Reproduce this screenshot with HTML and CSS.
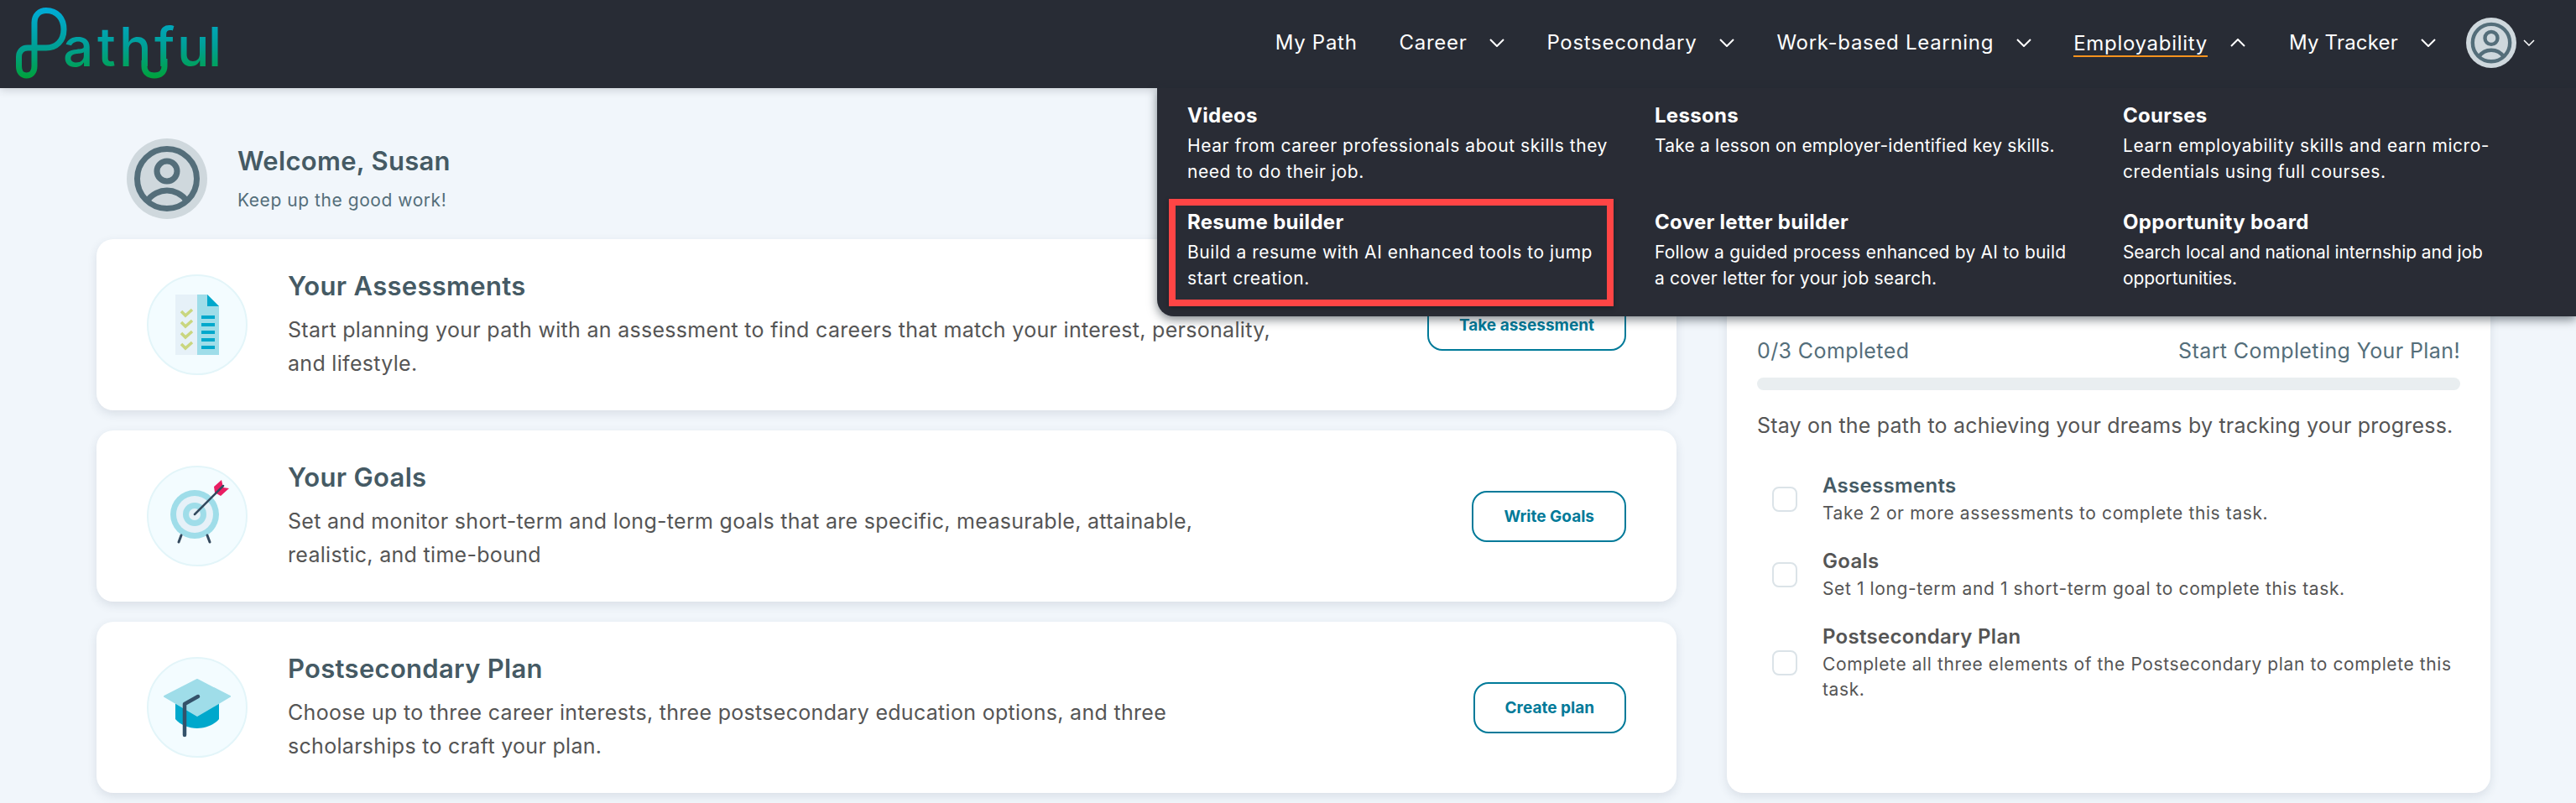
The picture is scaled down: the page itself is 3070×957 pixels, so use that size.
FILE: index.html
```html
<!DOCTYPE html>
<html lang="en">
<head>
<meta charset="utf-8">
<title>Pathful</title>
<link rel="stylesheet" href="styles.css">
</head>
<body>
<header class="topbar">
  <svg class="logo" viewBox="0 0 260 105" width="260" height="105" role="img" aria-label="Pathful">
    <defs>
      <linearGradient id="logoGrad" gradientUnits="userSpaceOnUse" x1="0" y1="9" x2="0" y2="93">
        <stop offset="0" stop-color="#00acd8"/>
        <stop offset=".55" stop-color="#009f96"/>
        <stop offset="1" stop-color="#00a23c"/>
      </linearGradient>
    </defs>
    <path class="logo-line" d="M41 79V27C41 18 47 12.500 55 12.500C68 12.500 76 22 76 35C76 49 67 57 55 57H33C26 57 22.500 62 22.500 68V79C22.500 86 26 90 31.500 90C37 90 41 86 41 79"/>
    <path class="logo-line" d="M172 72V79C172 86 177 90 184 90C191 90 196 86 196 79V70"/>
    <text class="logo-text" fill="url(#logoGrad)" x="75 116 142 184 211 248" y="79">athful</text>
  </svg>
  <nav class="nav">
    <a class="nav-item"><span>My Path</span></a>
    <a class="nav-item"><span>Career</span><svg class="chev" viewBox="0 0 18 10"><path d="M1 1l8 8 8-8"/></svg></a>
    <a class="nav-item"><span>Postsecondary</span><svg class="chev" viewBox="0 0 18 10"><path d="M1 1l8 8 8-8"/></svg></a>
    <a class="nav-item"><span>Work-based Learning</span><svg class="chev" viewBox="0 0 18 10"><path d="M1 1l8 8 8-8"/></svg></a>
    <a class="nav-item"><span class="active">Employability</span><svg class="chev" viewBox="0 0 18 10"><path d="M1 9l8-8 8 8"/></svg></a>
    <a class="nav-item nav-tracker"><span>My Tracker</span><svg class="chev" viewBox="0 0 18 10"><path d="M1 1l8 8 8-8"/></svg></a>
    <a class="nav-user">
      <svg class="avatar-sm" viewBox="0 0 96 96"><circle class="av-bg" cx="48" cy="48" r="48"/><circle class="av-line" cx="48" cy="48" r="35.500"/><circle class="av-line" cx="48" cy="39" r="12"/><path class="av-line" d="M24 75C30 66 40 62 48 62C56 62 66 66 72 75"/></svg>
      <svg class="chev-sm" viewBox="0 0 14 8"><path d="M1 1l6 6 6-6"/></svg>
    </a>
  </nav>
</header>

<div class="menu">
  <div class="menu-item"><h4>Videos</h4><p>Hear from career professionals about skills they need to do their job.</p></div>
  <div class="menu-item mid"><h4>Lessons</h4><p>Take a lesson on employer-identified key skills.</p></div>
  <div class="menu-item"><h4>Courses</h4><p>Learn employability skills and earn micro-credentials using full courses.</p></div>
  <div class="menu-item"><h4>Resume builder</h4><p>Build a resume with AI enhanced tools to jump start creation.</p></div>
  <div class="menu-item mid"><h4>Cover letter builder</h4><p>Follow a guided process enhanced by AI to build a cover letter for your job search.</p></div>
  <div class="menu-item tight"><h4>Opportunity board</h4><p>Search local and national internship and job opportunities.</p></div>
  <div class="highlight"></div>
</div>

<main class="page">
  <section class="left">
    <div class="welcome">
      <svg class="avatar" viewBox="0 0 96 96"><circle class="av-bg" cx="48" cy="48" r="48"/><circle class="av-line" cx="48" cy="48" r="35.500"/><circle class="av-line" cx="48" cy="39" r="12"/><path class="av-line" d="M24 75C30 66 40 62 48 62C56 62 66 66 72 75"/></svg>
      <div>
        <h1>Welcome, Susan</h1>
        <p>Keep up the good work!</p>
      </div>
    </div>

    <article class="card">
      <svg class="card-icon" viewBox="0 0 120 120">
        <circle class="ic-bg" cx="60" cy="60" r="59"/>
        <rect x="34" y="24" width="26" height="72" fill="#e6f1f8"/>
        <path d="M60 24H72L86 38V96H60Z" fill="#9fdde9"/>
        <path d="M72 24L86 38H72Z" fill="#00a8cc"/>
        <g fill="#00a8cc"><rect x="65" y="49" width="16" height="4"/><rect x="65" y="58" width="16" height="4"/><rect x="65" y="67" width="16" height="4"/><rect x="65" y="76" width="16" height="4"/><rect x="65" y="85" width="16" height="4"/></g>
        <g fill="none" stroke="#c9d67f" stroke-width="3.500"><path d="M41 44l5 5 8-7"/><path d="M41 57l5 5 8-7"/><path d="M41 70l5 5 8-7"/><path d="M41 83l5 5 8-7"/></g>
      </svg>
      <div class="card-text">
        <h2>Your Assessments</h2>
        <p>Start planning your path with an assessment to find careers that match your interest, personality, and lifestyle.</p>
      </div>
      <a class="btn">Take assessment</a>
    </article>

    <article class="card">
      <svg class="card-icon" viewBox="0 0 120 120">
        <circle class="ic-bg" cx="60" cy="60" r="59"/>
        <circle cx="57" cy="58" r="29" fill="#9fdde9"/><circle cx="57" cy="58" r="22" fill="#e6f1f8"/><circle cx="57" cy="58" r="14" fill="#9fdde9"/><circle cx="57" cy="58" r="7" fill="#e6f1f8"/>
        <path d="M89 17L80 25L81 32L88 36L98 27L91 26Z" fill="#e91e63"/>
        <g fill="none" stroke="#34495e" stroke-linecap="round"><path stroke-width="2.500" d="M57 58L91 24"/><path stroke-width="3" d="M41 83L38 91M72 83L75 91"/></g>
      </svg>
      <div class="card-text">
        <h2>Your Goals</h2>
        <p>Set and monitor short-term and long-term goals that are specific, measurable, attainable, realistic, and time-bound</p>
      </div>
      <a class="btn">Write Goals</a>
    </article>

    <article class="card">
      <svg class="card-icon" viewBox="0 0 120 120">
        <circle class="ic-bg" cx="60" cy="60" r="59"/>
        <path d="M34 55V74C40 81 50 85 60 85C70 85 80 81 86 74V55Z" fill="#00a8cc"/>
        <path d="M60 27L99 47L60 70L21 47Z" fill="#9fdde9" stroke="#9fdde9" stroke-width="2" stroke-linejoin="round"/>
        <path d="M61 47L45 56V93" fill="none" stroke="#34526a" stroke-width="4.500" stroke-linecap="round" stroke-linejoin="round"/>
      </svg>
      <div class="card-text">
        <h2>Postsecondary Plan</h2>
        <p>Choose up to three career interests, three postsecondary education options, and three scholarships to craft your plan.</p>
      </div>
      <a class="btn">Create plan</a>
    </article>
  </section>

  <aside class="tracker">
    <div class="tracker-head"><span>0/3 Completed</span><span>Start Completing Your Plan!</span></div>
    <div class="bar"></div>
    <p class="tracker-lead">Stay on the path to achieving your dreams by tracking your progress.</p>
    <ul class="tasks">
      <li class="task"><span class="check"></span><div><h3 class="blue">Assessments</h3><p>Take 2 or more assessments to complete this task.</p></div></li>
      <li class="task"><span class="check"></span><div><h3>Goals</h3><p>Set 1 long-term and 1 short-term goal to complete this task.</p></div></li>
      <li class="task"><span class="check"></span><div><h3>Postsecondary Plan</h3><p>Complete all three elements of the Postsecondary plan to complete this task.</p></div></li>
    </ul>
  </aside>
</main>
</body>
</html>
```
FILE: styles.css
```css
* { box-sizing: border-box; }
html, body { margin: 0; padding: 0; }
body {
  width: 3070px;
  height: 957px;
  overflow: hidden;
  background: #f1f6fb;
  font-family: Inter, "Open Sans", "Liberation Sans", sans-serif;
  color: #555;
  position: relative;
}
h1, h2, h3, h4, p, ul { margin: 0; padding: 0; }
ul { list-style: none; }

.topbar {
  height: 105px;
  background: #282c35;
  display: flex;
  justify-content: space-between;
  align-items: center;
  box-shadow: 0 2px 10px rgba(40, 44, 53, .2);
  position: relative;
  z-index: 2;
}
.logo { display: block; flex: none; overflow: visible; }
.logo-line { fill: none; stroke: url(#logoGrad); stroke-width: 7; }
.logo-text { font-family: Inter, sans-serif; font-size: 64px; font-weight: 500; }

.nav { display: flex; align-items: center; gap: 50px; padding: 0 49px 3px 0; }
.nav-item { display: flex; align-items: center; gap: 27px; color: #fff; font-size: 24px; letter-spacing: .7px; line-height: 30px; }
.nav-item .active { height: 29px; box-shadow: 0 2px 0 #f7931e; }
.nav-tracker { letter-spacing: .2px; margin-left: 2px; }
.chev { width: 18px; height: 10px; fill: none; stroke: #fff; stroke-width: 2; }
.nav-user { display: flex; align-items: center; gap: 8px; margin-left: -14px; }
.avatar-sm { width: 60px; height: 60px; display: block; }
.chev-sm { width: 14px; height: 8px; fill: none; stroke: #fff; stroke-width: 1.500; }
.av-bg { fill: #cfd8dd; }
.av-line { fill: none; stroke: #546e7a; stroke-width: 7; }

.menu {
  position: absolute;
  z-index: 3;
  top: 105px;
  left: 1379px;
  right: 0;
  height: 272px;
  padding: 17px 36px 0;
  background: #292c35;
  border-radius: 0 0 0 20px;
  box-shadow: 0 4px 12px rgba(30, 40, 50, .55);
  color: #fff;
  display: grid;
  grid-template-columns: 557px 558px 1fr;
  grid-template-rows: 127px 1fr;
}
.menu-item h4 { font-size: 24px; font-weight: 700; letter-spacing: .3px; line-height: 32px; }
.menu-item p { font-size: 21px; letter-spacing: .55px; line-height: 31px; max-width: 510px; margin-top: 4px; }
.menu-item.mid p { letter-spacing: .2px; max-width: 495px; }
.menu-item.tight p { letter-spacing: -.1px; }
.highlight {
  position: absolute;
  left: 14px;
  top: 132px;
  width: 530px;
  height: 128px;
  border: 8px solid #ff4545;
  box-shadow: 0 2px 6px rgba(0, 0, 0, .3);
}

.page {
  display: grid;
  grid-template-columns: 1883px 910px;
  gap: 60px;
  padding: 60px 0 0 115px;
}
.welcome { display: flex; align-items: center; gap: 36px; padding-left: 36px; height: 96px; margin-bottom: 24px; }
.avatar { width: 96px; height: 96px; flex: none; display: block; }
.welcome h1 { font-size: 31px; font-weight: 600; letter-spacing: .3px; line-height: 40px; color: #455a64; }
.welcome p { font-size: 21px; letter-spacing: .55px; line-height: 30px; color: #546e7a; margin-top: 12px; }

.card {
  height: 204px;
  margin-bottom: 24px;
  padding: 0 60px;
  background: #fff;
  border-radius: 20px;
  box-shadow: 0 4px 12px rgba(40, 60, 80, .12);
  display: flex;
  align-items: center;
  gap: 48px;
}
.card-icon { width: 120px; height: 120px; flex: none; display: block; }
.ic-bg { fill: #f3fcff; stroke: #e3f5f9; stroke-width: 2; }
.card-text { flex: 1; }
.card-text h2 { font-size: 31px; font-weight: 600; letter-spacing: .3px; line-height: 40px; color: #455a64; margin-bottom: 12px; }
.card-text p { font-size: 25px; letter-spacing: .3px; line-height: 40px; max-width: 1180px; color: #555; }

.btn {
  flex: none;
  height: 61px;
  padding: 0 36px;
  border: 2px solid #007a99;
  border-radius: 18px;
  color: #007a99;
  font-size: 19px;
  font-weight: 700;
  display: flex;
  align-items: center;
}

.tracker {
  margin-top: 120px;
  height: 660px;
  padding: 118px 36px 0;
  background: #fff;
  border-radius: 20px;
  box-shadow: 0 4px 12px rgba(40, 60, 80, .12);
}
.tracker-head { display: flex; justify-content: space-between; font-size: 25px; letter-spacing: .4px; line-height: 30px; color: #546e7a; }
.bar { height: 15px; margin-top: 17px; border-radius: 8px; background: #e9eef0; }
.tracker-lead { font-size: 25px; letter-spacing: .2px; line-height: 36px; margin-top: 24px; }
.tasks { margin-top: 38px; padding-left: 18px; }
.task { display: flex; align-items: center; gap: 30px; margin-bottom: 26px; }
.check { width: 30px; height: 30px; flex: none; border: 2px solid #dbe3e8; border-radius: 8px; background: #fff; }
.task h3 { font-size: 24px; font-weight: 600; letter-spacing: .3px; line-height: 32px; color: #555; }
.task h3.blue { color: #455a64; }
.task p { font-size: 21px; letter-spacing: .6px; line-height: 30px; margin-top: 2px; color: #555; }
```
